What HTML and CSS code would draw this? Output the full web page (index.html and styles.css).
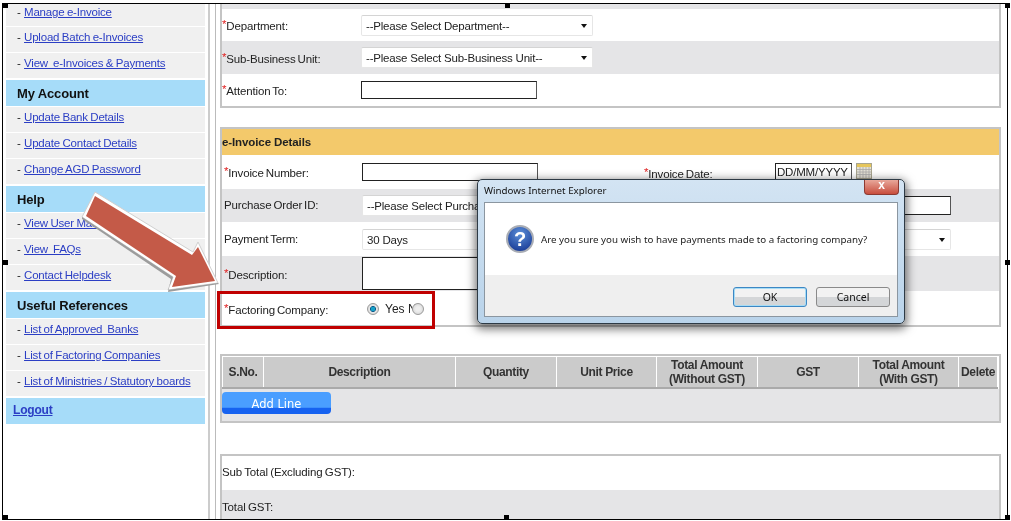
FILE: index.html
```html
<!DOCTYPE html>
<html lang="en">
<head>
<meta charset="utf-8">
<title>e-Invoice</title>
<link rel="stylesheet" href="styles.css">
</head>
<body>
<div class="shot">
  <div class="screen">
    <nav class="sidebar">
      <div class="item item-first">- <a href="#">Manage e-Invoice</a></div>
      <div class="item">- <a href="#">Upload Batch e-Invoices</a></div>
      <div class="item">- <a href="#">View &nbsp;e-Invoices &amp; Payments</a></div>
      <div class="head">My Account</div>
      <div class="item">- <a href="#">Update Bank Details</a></div>
      <div class="item">- <a href="#">Update Contact Details</a></div>
      <div class="item">- <a href="#">Change AGD Password</a></div>
      <div class="head">Help</div>
      <div class="item">- <a href="#">View User Manual</a></div>
      <div class="item">- <a href="#">View &nbsp;FAQs</a></div>
      <div class="item">- <a href="#">Contact Helpdesk</a></div>
      <div class="head">Useful References</div>
      <div class="item">- <a href="#">List of Approved &nbsp;Banks</a></div>
      <div class="item">- <a href="#">List of Factoring Companies</a></div>
      <div class="item">- <a href="#">List of Ministries / Statutory boards</a></div>
      <div class="head head-link"><a href="#">Logout</a></div>
    </nav>
    <div class="divider"></div>
    <main class="main">
      <section class="box box-top">
        <div class="strip"></div>
        <div class="row row-dept"><label class="label"><span class="req">*</span>Department:</label><div class="select sel-short"><span>--Please Select Department--</span><i class="caret"></i></div></div>
        <div class="row row-sub alt"><label class="label"><span class="req">*</span>Sub-Business Unit:</label><div class="select sel-short"><span>--Please Select Sub-Business Unit--</span><i class="caret"></i></div></div>
        <div class="row row-att"><label class="label"><span class="req">*</span>Attention To:</label><div class="input inp-att"></div></div>
      </section>

      <section class="box box-details">
        <h2 class="band">e-Invoice Details</h2>
        <div class="row2 r-inv">
          <label class="label lab2"><span class="req">*</span>Invoice Number:</label><div class="input inp-inv"></div>
          <label class="label date-lab"><span class="req">*</span>Invoice Date:</label>
          <div class="date-wrap"><div class="input inp-date">DD/MM/YYYY</div>
            <svg class="cal" viewBox="0 0 16 16" width="16" height="16"><rect x=".5" y=".5" width="15" height="15" fill="#e4e2d6" stroke="#a8a58f"/><rect x="1" y="1" width="14" height="3" fill="#e6c65c"/><path d="M1 6.5h14M1 9h14M1 11.500h14M4 4v11M7 4v11M10 4v11M13 4v11" stroke="#aaa" stroke-width=".8"/></svg>
          </div>
        </div>
        <div class="row2 r-po alt">
          <label class="label lab2 plain">Purchase Order ID:</label><div class="select sel-po"><span>--Please Select Purchase Order--</span><i class="caret"></i></div>
          <label class="label date-lab"></label><div class="input inp-right"></div>
        </div>
        <div class="row2 r-term">
          <label class="label lab2 plain">Payment Term:</label><div class="select sel-po"><span>30 Days</span><i class="caret"></i></div>
          <label class="label date-lab"></label><div class="select sel-right"><span></span><i class="caret"></i></div>
        </div>
        <div class="row2 r-desc alt">
          <label class="label lab2"><span class="req">*</span>Description:</label><div class="input inp-desc"></div>
        </div>
        <div class="row2 r-fact">
          <label class="label lab2"><span class="req">*</span>Factoring Company:</label>
          <div class="radios"><i class="radio on"></i><span class="yes">Yes N</span><i class="radio"></i></div>
        </div>
      </section>

      <section class="box box-table">
        <div class="thead">
          <div>S.No.</div><div>Description</div><div>Quantity</div><div>Unit Price</div><div>Total Amount<br>(Without GST)</div><div>GST</div><div>Total Amount<br>(With GST)</div><div>Delete</div>
        </div>
        <div class="tbody"><button class="add" type="button">Add Line</button></div>
      </section>

      <section class="box box-totals">
        <div class="total">Sub Total (Excluding GST):</div>
        <div class="total alt">Total GST:</div>
      </section>
    </main>
  </div>

  <svg class="arrow" viewBox="0 0 150 110" width="150" height="110">
    <path d="M19 0 6 25 97 85 92 98 142 91 122 50 117 60Z" fill="#fff" stroke="#d0d0d0" stroke-width="1"/>
    <path d="M6 25 97 85 92 98 142 91 143 92 92 100 95 87 6 27Z" fill="#9c9c9c"/>
    <path d="M19 4 10 24 100 84 96 95 139 89 122 55 116 63Z" fill="#c45a48"/>
  </svg>
  <div class="callout"></div>

  <div class="dialog" role="dialog">
    <div class="dlg-title">Windows Internet Explorer</div>
    <div class="dlg-close">x</div>
    <div class="dlg-body">
      <div class="dlg-msg">
        <svg class="dlg-icon" viewBox="0 0 28 28" width="28" height="28">
          <defs><radialGradient id="q" cx=".5" cy=".3" r=".8"><stop offset="0" stop-color="#5b8fd8"/><stop offset="1" stop-color="#102f8c"/></radialGradient></defs>
          <circle cx="14" cy="14" r="13" fill="url(#q)" stroke="#a9adb5" stroke-width="2"/>
          <text x="14" y="21" text-anchor="middle" class="q-mark">?</text>
        </svg>
        <p class="dlg-text">Are you sure you wish to have payments made to a factoring company?</p>
      </div>
      <div class="dlg-foot">
        <button class="dlg-btn dlg-ok" type="button">OK</button>
        <button class="dlg-btn" type="button">Cancel</button>
      </div>
    </div>
  </div>

  <i class="handle h-tl"></i><i class="handle h-tm"></i><i class="handle h-tr"></i>
  <i class="handle h-ml"></i><i class="handle h-mr"></i>
  <i class="handle h-bl"></i><i class="handle h-bm"></i><i class="handle h-br"></i>
</div>
</body>
</html>
```

FILE: styles.css
```css
* { box-sizing: border-box; }
html, body { margin: 0; padding: 0; background: #fff; }
body { width: 1011px; height: 521px; overflow: hidden; font-family: "Liberation Sans", Arial, sans-serif; font-size: 12px; color: #222; }

.shot { position: relative; width: 1011px; height: 521px; padding: 3px 0 0 2px; filter: blur(0.3px); }
.screen { display: flex; width: 1006px; height: 517px; border: 1px solid #000; overflow: hidden; background: #fff; }

/* sidebar */
.sidebar { flex: none; width: 199px; margin-left: 3px; display: flex; flex-direction: column; }
.item { height: 25px; margin-bottom: 1px; padding-left: 11px; line-height: 21px; background: #f0f0f0; font-size: 11.5px; color: #222; }
.item-first { height: 22px; line-height: 17px; }
.item a { color: #2b3ec4; letter-spacing: -0.2px; word-spacing: -0.5px; }
.head { height: 26px; margin: 1px 0 1px; padding-left: 11px; line-height: 27px; background: #a6dcf9; font-size: 13px; font-weight: bold; color: #111; letter-spacing: -0.15px; }
.head-link { padding-left: 7px; font-size: 12px; line-height: 25px; letter-spacing: -0.2px; }
.head-link a { color: #2b3ec4; }

.divider { flex: none; width: 8px; margin-left: 3px; border-left: 2px solid #ccc; border-right: 1px solid #bbb; }

/* main */
.main { flex: none; width: 781px; margin-left: 4px; }
.box { width: 781px; border: 2px solid #c4c4c4; background: #fff; }
.box-top { border-top: 0; }
.strip { height: 5px; background: #e5e5e7; }
.alt { background: #e5e5e7; }
.label { display: block; color: #222; font-size: 11.5px; letter-spacing: -0.15px; word-spacing: -1px; }
.req { color: #e02020; vertical-align: 2px; }

.row { display: flex; align-items: center; height: 32px; }
.row-sub { height: 33px; }
.row .label { width: 139px; }

.select { position: relative; height: 21px; padding-left: 4px; line-height: 20px; background: #fff; border: 1px solid #e6e6e6; border-top-color: #d4d4d4; border-radius: 2px; color: #222; font-size: 11.5px; letter-spacing: -0.2px; white-space: nowrap; overflow: hidden; }
.caret { position: absolute; right: 5px; top: 8px; width: 0; height: 0; border: 3.5px solid transparent; border-top: 4px solid #111; border-bottom: 0; }
.sel-short { width: 232px; }
.input { background: #fff; border: 1px solid #222; border-right-color: #555; }
.inp-att { width: 176px; height: 18px; }

.box-details { margin-top: 19px; }
.band { height: 26px; margin: 0; padding-left: 0; line-height: 27px; font-size: 11.5px; font-weight: bold; color: #222; background: #f3c96b; letter-spacing: -0.1px; }
.row2 { display: grid; grid-template-columns: 140px 282px 131px 176px; align-items: center; height: 33px; }
.lab2 { padding-left: 2px; }
.r-inv { height: 34px; }
.r-term { height: 34px; }
.r-desc { height: 35px; }
.r-fact { height: 34px; }
.r-fact .label { padding-top: 1px; }
.r-po .lab2 { height: 33px; line-height: 32px; background: #e5e5e7; }
.inp-inv { width: 176px; height: 18px; align-self: start; margin-top: 8px; }
.date-lab { align-self: end; margin-bottom: 9px; }
.date-wrap { display: flex; gap: 4px; align-self: start; margin-top: 8px; }
.inp-date { width: 77px; height: 18px; padding-left: 1px; line-height: 16px; font-size: 11.5px; letter-spacing: -0.2px; }
.cal { flex: none; }
.sel-po { width: 260px; }
.sel-right { width: 176px; }
.inp-right { width: 176px; height: 19px; }
.inp-desc { width: 260px; height: 33px; }
.radios { display: flex; align-items: center; padding: 2px 0 0 5px; }
.radio { flex: none; width: 12px; height: 12px; border-radius: 50%; border: 1px solid #9a9a9a; background: radial-gradient(circle, #eee 30%, #cfcfcf 100%); }
.radio.on { background: radial-gradient(circle, #16a0c8 0 28%, #0b4a7a 38%, #e8e8e8 45%, #d0d0d0 100%); }
.yes { flex: none; margin: 0 -5px 0 6px; white-space: nowrap; }

.box-table { margin-top: 27px; border-bottom-width: 2px; }
.thead { display: grid; grid-template-columns: 40px 191px 100px 99px 100px 100px 99px 38px; gap: 1px; padding: 1px 0 0 1px; border-bottom: 2px solid #aaa; margin-right: 1px; }
.thead div { display: flex; align-items: center; justify-content: center; height: 30px; text-align: center; line-height: 14px; font-weight: bold; color: #333; background: #cbcbcb; letter-spacing: -0.35px; }
.tbody { height: 32px; padding-top: 3px; background: #e5e5e7; }
.add { display: block; width: 109px; height: 22px; padding: 2px 0 0; border: 0; border-radius: 4px; color: #fff; font-family: "DejaVu Sans", sans-serif; font-size: 11.5px; background: linear-gradient(#4a9eff 0 70%, #1662f0 72% 100%); }

.box-totals { margin-top: 31px; border-bottom: 0; }
.total { height: 34px; padding-left: 0; line-height: 33px; font-size: 11.5px; letter-spacing: -0.15px; word-spacing: -0.6px; color: #222; }
.total.alt { height: 30px; line-height: 34px; }

/* arrow + callout */
.arrow { position: absolute; left: 76px; top: 192px; overflow: visible; }
.callout { position: absolute; left: 217px; top: 291px; width: 218px; height: 38px; border: 3px solid #c00000; }

/* dialog */
.dialog { position: absolute; left: 477px; top: 179px; width: 428px; height: 145px; padding: 22px 6px 6px; border: 1px solid #2d3a45; border-radius: 5px; background: linear-gradient(#d3e4f3, #b9d3ea); box-shadow: 0 3px 10px 2px rgba(0,0,0,.55); }
.dlg-title { position: absolute; left: 6px; top: 3px; font-family: "Noto Sans", sans-serif; font-size: 9.75px; line-height: 16px; color: #111; }
.dlg-close { position: absolute; right: 5px; top: 0; width: 35px; height: 15px; border-radius: 0 0 4px 4px; background: linear-gradient(#e8a79a, #c84e3e); border: 1px solid #8c3a32; border-top: 0; color: #fff; font: bold 12px/11px "Liberation Sans", sans-serif; text-align: center; }
.dlg-body { height: 115px; background: #fff; border: 1px solid #8b96a0; }
.dlg-msg { display: flex; align-items: center; height: 72px; padding-left: 21px; }
.dlg-icon { flex: none; }
.q-mark { font: bold 20px "Liberation Sans", sans-serif; fill: #fff; }
.dlg-text { margin: 0 0 0 7px; font-family: "Noto Sans", sans-serif; font-size: 9.75px; color: #222; white-space: nowrap; }
.dlg-foot { display: flex; justify-content: flex-end; gap: 9px; height: 41px; padding: 12px 7px 0 0; background: #efefef; }
.dlg-btn { width: 74px; height: 20px; padding: 0; border: 1px solid #8a8a8a; border-radius: 3px; font-family: "Noto Sans", sans-serif; font-size: 10.5px; color: #111; background: linear-gradient(#f2f2f2 0 48%, #d4d6d8 52% 100%); }
.dlg-ok { border-color: #3c87c4; box-shadow: inset 0 0 0 1px #a6dcf5; }

/* selection handles */
.handle { position: absolute; width: 5px; height: 5px; background: #000; }
.h-tl { left: 3px; top: 3px; }
.h-tm { left: 505px; top: 3px; }
.h-tr { left: 1005px; top: 3px; }
.h-ml { left: 3px; top: 260px; }
.h-mr { left: 1005px; top: 260px; }
.h-bl { left: 3px; top: 515px; }
.h-bm { left: 504px; top: 515px; }
.h-br { left: 1005px; top: 515px; }
```
